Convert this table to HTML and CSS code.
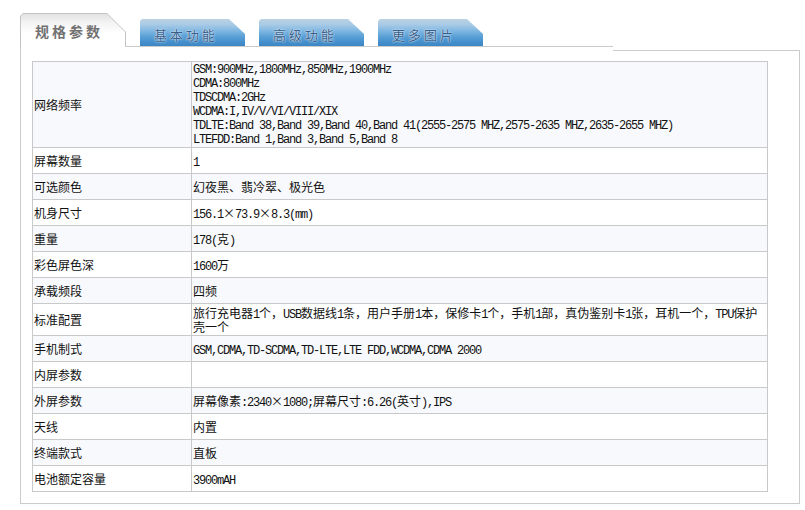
FILE: index.html
```html
<!DOCTYPE html>
<html lang="zh-CN">
<head>
<meta charset="utf-8">
<title>规格参数</title>
<link rel="stylesheet" href="styles.css">
</head>
<body>
<div class="wrap">
  <div class="tabs">
    <div class="tab tab-on"><span class="tab-txt">规格参数</span></div>
    <div class="tab tab-off"><span class="tab-txt">基本功能</span></div>
    <div class="tab tab-off"><span class="tab-txt">高级功能</span></div>
    <div class="tab tab-off"><span class="tab-txt">更多图片</span></div>
  </div>
  <div class="box">
    <table class="spec">
      <colgroup><col class="c1"><col class="c2"></colgroup>
      <tr class="odd multi">
        <td class="k">网络频率</td>
        <td class="v">
          <div class="ml">GSM:900MHz,1800MHz,850MHz,1900MHz</div>
          <div class="ml">CDMA:800MHz</div>
          <div class="ml">TDSCDMA:2GHz</div>
          <div class="ml">WCDMA:I,IV/V/VI/VIII/XIX</div>
          <div class="ml">TDLTE:Band 38,Band 39,Band 40,Band 41(2555-2575 MHZ,2575-2635 MHZ,2635-2655 MHZ)</div>
          <div class="ml">LTEFDD:Band 1,Band 3,Band 5,Band 8</div>
        </td>
      </tr>
      <tr><td class="k">屏幕数量</td><td class="v"><span class="m">1</span></td></tr>
      <tr class="odd"><td class="k">可选颜色</td><td class="v">幻夜黑、翡冷翠、极光色</td></tr>
      <tr><td class="k">机身尺寸</td><td class="v"><span class="m">156.1</span>×<span class="m">73.9</span>×<span class="m">8.3(mm)</span></td></tr>
      <tr class="odd"><td class="k">重量</td><td class="v"><span class="m">178(</span>克<span class="m">)</span></td></tr>
      <tr><td class="k">彩色屏色深</td><td class="v"><span class="m">1600</span>万</td></tr>
      <tr class="odd"><td class="k">承载频段</td><td class="v">四频</td></tr>
      <tr class="two"><td class="k">标准配置</td><td class="v">旅行充电器<span class="m">1</span>个，<span class="m">USB</span>数据线<span class="m">1</span>条，用户手册<span class="m">1</span>本，保修卡<span class="m">1</span>个，手机<span class="m">1</span>部，真伪鉴别卡<span class="m">1</span>张，耳机一个，<span class="m">TPU</span>保护壳一个</td></tr>
      <tr class="odd"><td class="k">手机制式</td><td class="v"><span class="m">GSM,CDMA,TD-SCDMA,TD-LTE,LTE FDD,WCDMA,CDMA 2000</span></td></tr>
      <tr><td class="k">内屏参数</td><td class="v"></td></tr>
      <tr class="odd"><td class="k">外屏参数</td><td class="v">屏幕像素<span class="m">:2340</span>×<span class="m">1080;</span>屏幕尺寸<span class="m">:6.26(</span>英寸<span class="m">),IPS</span></td></tr>
      <tr><td class="k">天线</td><td class="v">内置</td></tr>
      <tr class="odd"><td class="k">终端款式</td><td class="v">直板</td></tr>
      <tr><td class="k">电池额定容量</td><td class="v"><span class="m">3900mAH</span></td></tr>
    </table>
  </div>
</div>
</body>
</html>
```

FILE: styles.css
```css
html, body {
  margin: 0;
  padding: 0;
  background: #fff;
}

body {
  font-family: "Noto Sans CJK SC", sans-serif;
  color: #000;
}

.wrap {
  margin: 13px 0 0 20px;
  width: 780px;
}

/* ---------- tabs ---------- */
.tabs {
  display: flex;
  align-items: flex-end;
  gap: 14px;
  width: 593px;
  height: 33px;
  border-bottom: 1px solid #cbcbcb;
}

.tab {
  position: relative;
  flex: none;
  display: flex;
  align-items: center;
  box-sizing: border-box;
}

.tab-on {
  width: 106px;
  height: 34px;
  margin-bottom: -1px;
  padding: 0 0 0 15px;
  background: #c4c4c4;
  clip-path: polygon(0 3px, 3px 0, 87px 0, 106px 19px, 106px 100%, 0 100%);
}

.tab-on::before {
  content: "";
  position: absolute;
  left: 1px;
  top: 1px;
  right: 1px;
  bottom: 0;
  background: linear-gradient(to bottom, #e2e2e2 0, #f3f3f3 25%, #fff 60%, #fff 100%);
  clip-path: polygon(0 2px, 2px 0, 86px 0, 104px 18px, 104px 100%, 0 100%);
}

.tab-on .tab-txt {
  position: relative;
  font-size: 14px;
  font-weight: bold;
  letter-spacing: 3px;
  color: #727272;
  margin-top: 1px;
}

.tab-off {
  width: 105px;
  height: 27px;
  padding: 0 0 0 14px;
  background: linear-gradient(to bottom, #bcd2e3 0, #a9cbe6 20%, #7db6e1 45%, #5aa0d6 65%, #448fcc 85%, #3c86c3 100%);
  clip-path: polygon(0 2px, 2px 0, 89px 0, 105px 15px, 105px 100%, 0 100%);
}

.tab-off .tab-txt {
  font-size: 13px;
  letter-spacing: 3px;
  color: #3b5f88;
  text-shadow: 0 0 1px #eaf4ff, 0 0 2px #d8ebfb;
  margin-top: 3px;
}

/* ---------- box ---------- */
.box {
  position: relative;
  border-left: 1px solid #cbcbcb;
  border-bottom: 1px solid #cbcbcb;
  padding: 14px 0 11px 11px;
}

.box::after {
  content: "";
  position: absolute;
  top: 3px;
  left: 592px;
  right: 0;
  bottom: -1px;
  border-top: 1px solid #cbcbcb;
  border-right: 1px solid #cbcbcb;
}

/* ---------- table ---------- */
.spec {
  width: 736px;
  border-collapse: collapse;
  border: 1px solid #c9c9c9;
  table-layout: fixed;
}

.c1 { width: 159px; }

.spec tr { height: 26px; }
.spec tr.odd { background: #f8f9fc; }

.spec td {
  border: 1px solid #c9c9c9;
  padding: 1px 1px;
  line-height: 14px;
  vertical-align: middle;
  font-size: 12px;
}

.spec tr.multi td { padding: 1px 1px 0; }
.spec tr.two td { padding: 2px 1px 1px; }

.k {
  color: #111;
}

.v {
  color: #111;
}

.m {
  font-family: "Liberation Mono", monospace;
  font-size: 12px;
  letter-spacing: -1.2px;
  line-height: 0;
}

.ml {
  font-family: "Liberation Mono", monospace;
  font-size: 12px;
  letter-spacing: -1.2px;
  line-height: 14px;
}
```
